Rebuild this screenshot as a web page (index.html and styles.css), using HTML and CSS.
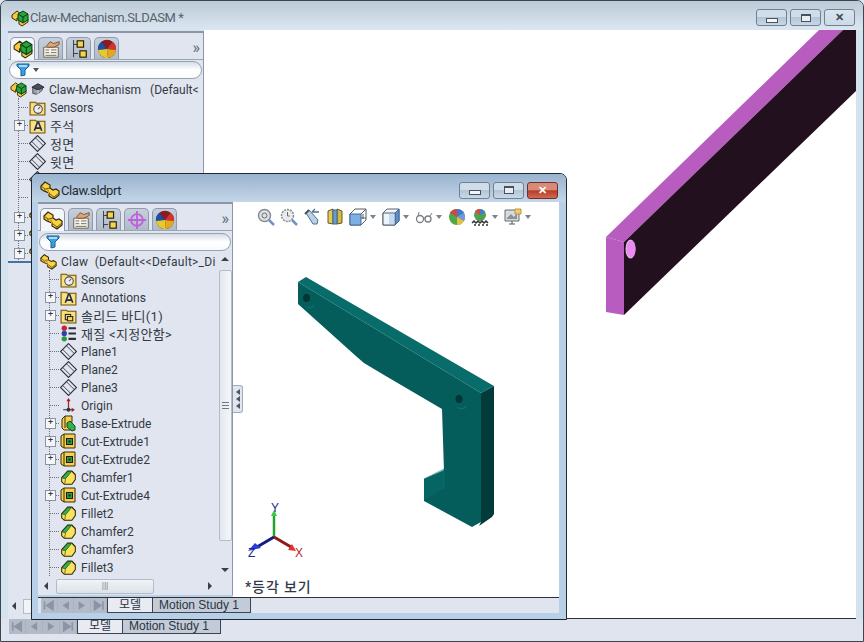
FILE: index.html
```html
<!DOCTYPE html>
<html lang="ko">

<head>
    <meta charset="utf-8">
    <title>Claw-Mechanism.SLDASM</title>
    <link rel="stylesheet" href="styles.css">
</head>

<body>
    <!-- shared icons -->
    <svg class="defs" width="0" height="0">
        <defs>
            <symbol id="i-part" viewBox="0 0 20 18">
                <path d="M1 5 5 1l5 3v3l3 2 3-1 3 2v4l-5 4-5-3v-3L4 10 1 8z" fill="#f9d246" stroke="#33280a" stroke-width="1.200"/>
                <path d="M1 5l4 3 5-1M10 13l4 3 5-4M14 16v1M5 8v2" fill="none" stroke="#6d5410"/>
                <path d="M5 8l3 2v3l1 .5V9L5 7z" fill="#d89a20"/>
            </symbol>
            <symbol id="i-asm" viewBox="0 0 18 18">
                <path d="M1 6 6 2l4 3 0 2 3 2 0 2 4-1v3l-6 4-3-2V11L6 9v3L1 9z" fill="#f6c83c" stroke="#3a2c08"/>
                <path d="M7 5l5-3 5 3v6l-5 3-5-3z" fill="#27a43a" stroke="#0c3d14"/>
                <path d="M7 5l5 3 5-3M12 8v6" fill="none" stroke="#0c3d14"/>
            </symbol>
            <symbol id="i-sub" viewBox="0 0 16 16">
                <path d="M2 13V6l5-3 6 3v3l-3 3-4 2z" fill="#9aa0a8" stroke="#3c4048"/>
                <path d="M1 6l7-4 7 4-7 3z" fill="#4a4e58" stroke="#22242a"/>
                <path d="M8 9v6" stroke="#e8e8e8"/>
            </symbol>
            <symbol id="i-folder" viewBox="0 0 16 16">
                <path d="M1 3h5l1 1h8v11H1z" fill="#f7d765" stroke="#6d5410"/>
                <path d="M2 5h12v9H2z" fill="#fbe896" opacity=".6"/>
            </symbol>
            <symbol id="i-sensor" viewBox="0 0 16 16">
                <use href="#i-folder"/>
                <circle cx="8.500" cy="9.500" r="4" fill="#e8eef4" stroke="#3c4a58"/>
                <path d="M8.500 9.500l2-2" stroke="#c0392b"/>
            </symbol>
            <symbol id="i-annot" viewBox="0 0 16 16">
                <use href="#i-folder"/>
                <path d="M5 13 8 5h1l3 8M6 10.500h5" fill="none" stroke="#1c2a58" stroke-width="1.500"/>
            </symbol>
            <symbol id="i-body" viewBox="0 0 16 16">
                <use href="#i-folder"/>
                <rect x="5" y="7" width="5" height="5" fill="#f7d765" stroke="#222"/>
                <rect x="7" y="9" width="5" height="4" fill="#f7d765" stroke="#222"/>
            </symbol>
            <symbol id="i-mat" viewBox="0 0 16 16">
                <circle cx="4" cy="3" r="2.500" fill="#c8242c"/>
                <circle cx="4" cy="8" r="2.500" fill="#2840b8"/>
                <circle cx="4" cy="13" r="2.500" fill="#2a9a3c"/>
                <path d="M8 3h7M8 8h7M8 13h7" stroke="#2c2c34" stroke-width="2"/>
            </symbol>
            <symbol id="i-plane" viewBox="0 0 16 16">
                <path d="M8 .5 15.500 8 8 15.500 .5 8z" fill="none" stroke="#30343c"/>
                <path d="M6 2.500l7.500 7.500M2.500 6l7.500 7.500" fill="none" stroke="#30343c" stroke-width=".8"/>
            </symbol>
            <symbol id="i-origin" viewBox="0 0 16 16">
                <path d="M8 2v10" stroke="#a81c22" stroke-width="1.200"/>
                <path d="M6 4l2-3 2 3z" fill="#a81c22"/>
                <path d="M3 12h10" stroke="#30343c"/>
                <path d="M11 10l3 2-3 2z" fill="#a81c22"/>
                <circle cx="8" cy="12" r="1.800" fill="#30343c"/>
            </symbol>
            <symbol id="i-base" viewBox="0 0 17 17">
                <path d="M2 4l3-3h7v5l-1 9H4l-2-2z" fill="#f7cf50" stroke="#3a2c08"/>
                <path d="M5 1v12" stroke="#3a2c08"/>
                <path d="M7 8l3-2 5 5v4l-3 1-5-4z" fill="#35b04c" stroke="#0f4a1c"/>
            </symbol>
            <symbol id="i-cut" viewBox="0 0 17 17">
                <path d="M1 3l3-2h11v14H4l-3-2z" fill="#f7cf50" stroke="#3a2c08"/>
                <path d="M4 1v14" stroke="#3a2c08"/>
                <rect x="6.500" y="5.500" width="6" height="6" fill="#2f9a42" stroke="#1b1d10"/>
                <rect x="8.500" y="7.500" width="2" height="2" fill="#102a14"/>
            </symbol>
            <symbol id="i-fillet" viewBox="0 0 20 18">
                <path d="M2 9 9 1.500h5l4 4v6l-4 5.500H5l-3-3z" fill="#fbe25c" stroke="#2a2408" stroke-width="1.200"/>
                <path d="M2.500 9.500 9 2h4.500l-7 8.500z" fill="#35b04c" stroke="#0f4a1c" stroke-width=".8"/>
                <path d="M6.500 10.500l-1 6M13.500 2l4 4" fill="none" stroke="#6a5a14"/>
            </symbol>
            <symbol id="i-prop" viewBox="0 0 22 22">
                <path d="M3 9h16v11H3z" fill="#f4f2ec" stroke="#6a6048"/>
                <path d="M5 12h4M11 12h6M5 15h4M11 15h6M5 18h12" stroke="#706858"/>
                <path d="M6 8l4-5 4 2 6-2v3l-6 3H7z" fill="#d8a878" stroke="#7a5030"/>
            </symbol>
            <symbol id="i-conf" viewBox="0 0 22 22">
                <path d="M5 1v19M5 6h5M5 16h5" stroke="#30343c" fill="none"/>
                <rect x="9" y="2" width="7" height="7" fill="#f4d450" stroke="#2c2408" stroke-width="1.300"/>
                <rect x="12" y="13" width="7" height="7" fill="#f4d450" stroke="#2c2408" stroke-width="1.300"/>
            </symbol>
            <symbol id="i-dim" viewBox="0 0 22 22">
                <circle cx="11" cy="11" r="6.500" fill="none" stroke="#c060d8" stroke-width="2"/>
                <path d="M11 1v20M1 11h20" stroke="#c060d8" stroke-width="2"/>
            </symbol>
            <symbol id="i-ball" viewBox="0 0 22 22">
                <circle cx="11" cy="11" r="10" fill="#2a2a2a"/>
                <path d="M11 11 5 3a10 10 0 0 0-4 9z" fill="#1b4fa8"/>
                <path d="M11 11 5 3a10 10 0 0 1 12 0z" fill="#8c1c22"/>
                <path d="M11 11l6-8a10 10 0 0 1 4 9z" fill="#d83030"/>
                <path d="M11 11l10 1a10 10 0 0 1-9 9z" fill="#e4a820"/>
                <path d="M11 11l1 10a10 10 0 0 1-11-9z" fill="#e6c830"/>
            </symbol>
            <symbol id="i-funnel" viewBox="0 0 14 14">
                <path d="M1 1h12v2L9 7v5l-4 1V7L1 3z" fill="#3ca0e0" stroke="#1a5c9c"/>
                <path d="M3 3h8" stroke="#d4ecfa" stroke-width="1.500"/>
            </symbol>
            <symbol id="i-zoomfit" viewBox="0 0 18 18">
                <circle cx="7.500" cy="7.500" r="6" fill="#dfe3e6" stroke="#868c92" stroke-width="1.500"/>
                <circle cx="7.500" cy="7.500" r="2.500" fill="none" stroke="#666c72"/>
                <path d="M12 12l5 5" stroke="#6f93c6" stroke-width="2.500"/>
            </symbol>
            <symbol id="i-zoomarea" viewBox="0 0 18 18">
                <circle cx="7.500" cy="7.500" r="6" fill="#e8eaec" stroke="#868c92" stroke-width="1.500" stroke-dasharray="2 1"/>
                <path d="M7.500 4v4h2" fill="none" stroke="#666c72"/>
                <path d="M12 12l5 5" stroke="#6f93c6" stroke-width="2.500"/>
            </symbol>
            <symbol id="i-prev" viewBox="0 0 18 18">
                <path d="M3 5l3-3 9 10-1 4-4 0z" fill="#b8d0e8" stroke="#50708c"/>
                <path d="M2 6l4-4" stroke="#40505c" stroke-width="2"/>
                <path d="M9 4h7M9 4l3-3" fill="none" stroke="#50708c" stroke-width="1.300"/>
            </symbol>
            <symbol id="i-section" viewBox="0 0 18 18">
                <path d="M2 3l5-2v15l-5-1z" fill="#e8c850" stroke="#5a5a30"/>
                <path d="M11 1l5 2v12l-5 1z" fill="#d8b840" stroke="#5a5a30"/>
                <path d="M7 2h4v14H7z" fill="#6a9cd0" stroke="#3c6890"/>
            </symbol>
            <symbol id="i-cubeview" viewBox="0 0 18 18">
                <path d="M1 6l5-5h11v11l-5 5H1z" fill="#fff" stroke="#555c66"/>
                <path d="M1 6h11v11H1z" fill="#7cb0e4" stroke="#3e6a98"/>
                <path d="M12 6l5-5M12 10h5M14 6v5" fill="none" stroke="#555c66"/>
            </symbol>
            <symbol id="i-cube" viewBox="0 0 18 18">
                <path d="M1 5l4-4h12v12l-4 4H1z" fill="#f4f8fc" stroke="#55606c"/>
                <path d="M13 5l4-4v12l-4 4z" fill="#5a90d0" stroke="#3e6a98"/>
                <path d="M1 5h12v12H1z" fill="#eef4fb" stroke="#55606c"/>
                <path d="M7 6h6v10H7z" fill="#a8c8ec" opacity=".6"/>
            </symbol>
            <symbol id="i-glasses" viewBox="0 0 18 18">
                <circle cx="5" cy="11" r="3.500" fill="none" stroke="#7a7e84" stroke-width="1.300"/>
                <circle cx="13" cy="11" r="3" fill="none" stroke="#7a7e84" stroke-width="1.300"/>
                <path d="M8 10l2 0M3 8l1-4M15 8l2-3" fill="none" stroke="#7a7e84"/>
            </symbol>
            <symbol id="i-appear" viewBox="0 0 18 18">
                <circle cx="9" cy="9" r="8" fill="#4ea848"/>
                <path d="M9 9 2 5a8 8 0 0 1 7-4z" fill="#d04840"/>
                <path d="M9 9V1a8 8 0 0 1 7 4z" fill="#4478d0"/>
                <path d="M9 9l7-4a8 8 0 0 1 0 8z" fill="#7098e0"/>
                <path d="M9 9l7 4a8 8 0 0 1-7 4z" fill="#e8c040"/>
            </symbol>
            <symbol id="i-scene" viewBox="0 0 18 18">
                <circle cx="9" cy="7" r="6" fill="#50a050"/>
                <path d="M9 7 4 3a6 6 0 0 1 5-2z" fill="#d84840"/>
                <path d="M9 7V1a6 6 0 0 1 5 3z" fill="#4878d0"/>
                <path d="M1 15l2-2 2 2 2-2 2 2 2-2 2 2 2-2 2 2M3 17h2M7 17h2M11 17h2M15 17h2" fill="none" stroke="#333" stroke-width="1.500"/>
            </symbol>
            <symbol id="i-display" viewBox="0 0 18 18">
                <path d="M1 2h14v11H1z" fill="#d8dbde" stroke="#666c72"/>
                <path d="M3 10l4-4 3 3 3-4v6H3z" fill="#8a9098"/>
                <path d="M11 1h6v5h-6z" fill="#f0cc70" stroke="#b89840"/>
                <path d="M5 16h6M8 13v3" stroke="#555"/>
            </symbol>
            <symbol id="i-first" viewBox="0 0 14 14"><path d="M3 3v8M11 3v8L5 7z" fill="#8d94a4" stroke="#8d94a4" stroke-width="1.500"/></symbol>
            <symbol id="i-back" viewBox="0 0 14 14"><path d="M10 3v8L4 7z" fill="#8d94a4"/></symbol>
            <symbol id="i-fwd" viewBox="0 0 14 14"><path d="M4 3v8l6-4z" fill="#8d94a4"/></symbol>
            <symbol id="i-last" viewBox="0 0 14 14"><path d="M11 3v8M3 3v8l6-4z" fill="#8d94a4" stroke="#8d94a4" stroke-width="1.500"/></symbol>
        </defs>
    </svg>

    <div class="desk">
        <!-- assembly window behind -->
        <div class="win win-back">
            <div class="titlebar">
                <svg class="title-icon"><use href="#i-asm"/></svg>
                <span class="title-text">Claw-Mechanism.SLDASM *</span>
                <div class="winbtns">
                    <div class="winbtn"><span class="glyph-min"></span></div>
                    <div class="winbtn"><span class="glyph-max"></span></div>
                    <div class="winbtn winbtn-x">&#x2715;</div>
                </div>
            </div>
            <div class="client">
                <div class="panel panel-back">
                    <div class="tabs">
                        <div class="tab active"><svg><use href="#i-asm"/></svg></div>
                        <div class="tab"><svg><use href="#i-prop"/></svg></div>
                        <div class="tab"><svg><use href="#i-conf"/></svg></div>
                        <div class="tab"><svg><use href="#i-ball"/></svg></div>
                        <span class="more">&raquo;</span>
                    </div>
                    <div class="filter"><svg><use href="#i-funnel"/></svg><span class="caret"></span></div>
                    <div class="root-row">
                        <svg class="ic"><use href="#i-asm"/></svg>
                        <svg class="ic ic-sub"><use href="#i-sub"/></svg>
                        <span>Claw-Mechanism&nbsp;&nbsp;&nbsp;(Default&lt;</span>
                    </div>
                    <ul class="tree">
                        <li><svg class="ic"><use href="#i-sensor"/></svg>Sensors</li>
                        <li class="has-kids"><svg class="ic"><use href="#i-annot"/></svg><span class="ko">주석</span></li>
                        <li><svg class="ic"><use href="#i-plane"/></svg><span class="ko">정면</span></li>
                        <li><svg class="ic"><use href="#i-plane"/></svg><span class="ko">윗면</span></li>
                        <li><svg class="ic"><use href="#i-plane"/></svg></li>
                        <li><svg class="ic"><use href="#i-origin"/></svg></li>
                        <li class="has-kids"><svg class="ic"><use href="#i-part"/></svg></li>
                        <li class="has-kids"><svg class="ic"><use href="#i-part"/></svg></li>
                        <li class="has-kids"><svg class="ic"><use href="#i-part"/></svg></li>
                    </ul>
                    <div class="rollback"></div>
                    <div class="hscroll-back"><span class="arrow-l"></span><span class="thumb-back"></span></div>
                </div>
                <div class="viewport">
                    <svg class="scene" viewBox="203 30 653 589" width="653" height="589">
                        <path d="M605 237 818 30h24L623 242z" fill="#b95cc0"/>
                        <path d="M605 237l18 5v73l-18-3z" fill="#b95cc0"/>
                        <path d="M623 242 842 30h14v60L623 315z" fill="#22101f"/>
                        <ellipse cx="629.500" cy="249" rx="5" ry="9.500" fill="#d8c0dc"/>
                        <ellipse cx="630" cy="249" rx="4.500" ry="8.500" fill="#ee88f5"/>
                    </svg>
                </div>
            </div>
            <div class="sheet-tabs sheet-tabs-back">
                <div class="nav"><svg><use href="#i-first"/></svg><svg><use href="#i-back"/></svg><svg><use href="#i-fwd"/></svg><svg><use href="#i-last"/></svg></div>
                <div class="sheet active">모델</div>
                <div class="sheet">Motion Study 1</div>
            </div>
        </div>

        <!-- part window in front -->
        <div class="win win-front">
            <div class="titlebar">
                <svg class="title-icon"><use href="#i-part"/></svg>
                <span class="title-text">Claw.sldprt</span>
                <div class="winbtns">
                    <div class="winbtn"><span class="glyph-min"></span></div>
                    <div class="winbtn"><span class="glyph-max"></span></div>
                    <div class="winbtn winbtn-close">&#x2715;</div>
                </div>
            </div>
            <div class="client">
                <div class="panel panel-front">
                    <div class="tabs">
                        <div class="tab active"><svg><use href="#i-part"/></svg></div>
                        <div class="tab"><svg><use href="#i-prop"/></svg></div>
                        <div class="tab"><svg><use href="#i-conf"/></svg></div>
                        <div class="tab"><svg><use href="#i-dim"/></svg></div>
                        <div class="tab"><svg><use href="#i-ball"/></svg></div>
                        <span class="more">&raquo;</span>
                    </div>
                    <div class="filter"><svg><use href="#i-funnel"/></svg></div>
                    <div class="tree-wrap">
                        <div class="tree-col">
                            <div class="root-row">
                                <svg class="ic"><use href="#i-part"/></svg>
                                <span>Claw&nbsp;&nbsp;(Default&lt;&lt;Default&gt;_Di</span>
                            </div>
                            <ul class="tree">
                                <li><svg class="ic"><use href="#i-sensor"/></svg>Sensors</li>
                                <li class="has-kids"><svg class="ic"><use href="#i-annot"/></svg>Annotations</li>
                                <li class="has-kids"><svg class="ic"><use href="#i-body"/></svg><span class="ko">솔리드 바디(1)</span></li>
                                <li><svg class="ic"><use href="#i-mat"/></svg><span class="ko">재질 &lt;지정안함&gt;</span></li>
                                <li><svg class="ic"><use href="#i-plane"/></svg>Plane1</li>
                                <li><svg class="ic"><use href="#i-plane"/></svg>Plane2</li>
                                <li><svg class="ic"><use href="#i-plane"/></svg>Plane3</li>
                                <li><svg class="ic"><use href="#i-origin"/></svg>Origin</li>
                                <li class="has-kids"><svg class="ic"><use href="#i-base"/></svg>Base-Extrude</li>
                                <li class="has-kids"><svg class="ic"><use href="#i-cut"/></svg>Cut-Extrude1</li>
                                <li class="has-kids"><svg class="ic"><use href="#i-cut"/></svg>Cut-Extrude2</li>
                                <li><svg class="ic"><use href="#i-fillet"/></svg>Chamfer1</li>
                                <li class="has-kids"><svg class="ic"><use href="#i-cut"/></svg>Cut-Extrude4</li>
                                <li><svg class="ic"><use href="#i-fillet"/></svg>Fillet2</li>
                                <li><svg class="ic"><use href="#i-fillet"/></svg>Chamfer2</li>
                                <li><svg class="ic"><use href="#i-fillet"/></svg>Chamfer3</li>
                                <li><svg class="ic"><use href="#i-fillet"/></svg>Fillet3</li>
                            </ul>
                        </div>
                        <div class="vscroll">
                            <span class="arrow-up"></span>
                            <div class="vthumb"><span class="grip"></span></div>
                            <span class="arrow-down"></span>
                        </div>
                    </div>
                    <div class="hscroll">
                        <span class="arrow-l"></span>
                        <div class="hthumb">|||</div>
                        <span class="arrow-r"></span>
                    </div>
                </div>
                <div class="handle"><span></span><span></span><span></span></div>
                <div class="viewport">
                    <div class="toolbar">
                        <svg><use href="#i-zoomfit"/></svg>
                        <svg><use href="#i-zoomarea"/></svg>
                        <svg><use href="#i-prev"/></svg>
                        <svg><use href="#i-section"/></svg>
                        <svg><use href="#i-cubeview"/></svg><span class="caret gap"></span>
                        <svg><use href="#i-cube"/></svg><span class="caret gap"></span>
                        <svg><use href="#i-glasses"/></svg><span class="caret gap"></span>
                        <svg><use href="#i-appear"/></svg>
                        <svg><use href="#i-scene"/></svg><span class="caret gap"></span>
                        <svg><use href="#i-display"/></svg><span class="caret"></span>
                    </div>
                    <svg class="scene" viewBox="234 203 325 394" width="325" height="394">
                        <path d="M299 283l8-5 188 109-13 7-183-111z" fill="#086c6a"/>
                        <path d="M299 283v22l59 53 7 6 20 12 58 34 2 62-20 8v22l48 26 9-5V394z" fill="#055d5b"/>
                        <path d="M482 394l13-7v128l-2 3-13 9 2-4z" fill="#033b3a"/>
                        <path d="M425 480l20-9v18l-20 12z" fill="#066563"/>
                        <path d="M425 480l20-10v20" fill="none" stroke="#087270" stroke-width=".6"/>
                        <path d="M304 303a7 7 0 0 0 11 5l1-7a6 6 0 0 1-12 2z" fill="#077270"/>
                        <ellipse cx="307.500" cy="299" rx="3.500" ry="4" fill="#023534"/>
                        <path d="M456 404a7 7 0 0 0 11 5l1-7a6 6 0 0 1-12 2z" fill="#077270"/>
                        <ellipse cx="460" cy="400" rx="3.500" ry="4" fill="#023534"/>
                        <path d="M275 538v-24" stroke="#28a030" stroke-width="2.500"/>
                        <path d="M275 511l-3 6h6z" fill="#30d040"/>
                        <path d="M275 538l-17 10" stroke="#141c80" stroke-width="3"/>
                        <path d="M249 552l7-8 6 5z" fill="#2c3cd8"/>
                        <path d="M275 538l17 10" stroke="#8c1c1c" stroke-width="3"/>
                        <path d="M297 552l-8-1 4-6z" fill="#e03038"/>
                        <text class="axis ax-y" x="272" y="513">Y</text>
                        <text class="axis ax-z" x="249" y="558">Z</text>
                        <text class="axis ax-x" x="296" y="558">X</text>
                    </svg>
                    <span class="view-name">*등각 보기</span>
                </div>
            </div>
            <div class="sheet-tabs">
                <div class="nav"><svg><use href="#i-first"/></svg><svg><use href="#i-back"/></svg><svg><use href="#i-fwd"/></svg><svg><use href="#i-last"/></svg></div>
                <div class="sheet active">모델</div>
                <div class="sheet">Motion Study 1</div>
            </div>
        </div>
    </div>
</body>

</html>
```

FILE: styles.css
```css
* {
    box-sizing: border-box;
}

body {
    margin: 0;
    font-family: Roboto, "Noto Sans CJK KR", sans-serif;
    font-size: 12px;
    color: #333a44;
}

.defs {
    position: absolute;
}

.desk {
    position: relative;
    width: 864px;
    height: 642px;
    overflow: hidden;
    background: #dfe4ee;
}

.win {
    position: absolute;
    display: flex;
    flex-direction: column;
    border: 1px solid #1d2a30;
    border-radius: 7px 7px 0 0;
}

.win-back {
    left: 0;
    top: 0;
    width: 864px;
    height: 642px;
    background: #d3e2ef;
    border-color: #3c4650;
}

.win-front {
    left: 31px;
    top: 173px;
    width: 536px;
    height: 447px;
    background: #b7d0e8;
}

/* title bars */
.titlebar {
    display: flex;
    align-items: center;
    flex-shrink: 0;
}

.win-back .titlebar {
    height: 29px;
    padding: 4px 8px 0 9px;
    background: linear-gradient(#bccbd8, #dbe6f0);
    border-radius: 6px 6px 0 0;
}

.win-front .titlebar {
    height: 28px;
    padding: 4px 8px 0 8px;
    background: linear-gradient(#9ab3cf, #c4d6e8);
    border-radius: 6px 6px 0 0;
}

.title-icon {
    width: 20px;
    height: 18px;
}

.title-text {
    font-size: 13px;
    letter-spacing: -.4px;
    color: #59626c;
}

.win-front .title-text {
    margin-left: 1px;
    color: #262c34;
}

.winbtns {
    display: flex;
    gap: 3px;
    margin-left: auto;
}

.winbtn {
    display: flex;
    align-items: center;
    justify-content: center;
    width: 31px;
    height: 17px;
    font-size: 11px;
    font-weight: bold;
    color: #3c4852;
    background: linear-gradient(#cfdde9 45%, #b4c5d6 50%, #c8d8e6);
    border: 1px solid #6f8193;
    border-radius: 3px;
}

.winbtn-x {
    background: linear-gradient(#d8e4ee, #cddbe8);
}

.winbtn-close {
    color: #fff;
    background: linear-gradient(#d88a78 45%, #b83c28 52%, #d06a52);
    border-color: #70302a;
}

.glyph-min {
    width: 12px;
    height: 5px;
    margin-top: 5px;
    background: #f2f6fa;
    border: 1px solid #46525e;
}

.glyph-max {
    width: 10px;
    height: 8px;
    background: #e8eef4;
    border: 1px solid #46525e;
    border-top-width: 2px;
}

/* window body */
.client {
    display: flex;
    flex: 1;
    min-height: 0;
    position: relative;
}

.win-back .client {
    margin: 0 7px 0 7px;
}

.win-front .client {
    margin: 0 7px 0 6px;
}

.panel {
    display: flex;
    flex-direction: column;
    flex-shrink: 0;
    position: relative;
    background: #e0e5ef;
    border-top: 2px solid #8b97a8;
    border-right: 1px solid #8b97a8;
}

.panel-back {
    width: 196px;
    margin-top: 1px;
}

.panel-back .filter {
    margin-top: 1px;
}

.panel-back .tree {
    margin-left: 10px;
}

.panel-back .tree li:nth-child(7) {
    margin-top: 2px;
}

.panel-front {
    width: 195px;
    margin-bottom: 2px;
}

.panel-front .root-row span {
    letter-spacing: .25px;
}

.viewport {
    position: relative;
    flex: 1;
    background: #fff;
    overflow: hidden;
}

.win-back .viewport {
    border-bottom: 1px solid #2c3238;
}

.scene {
    display: block;
}

/* panel tabs */
.tabs {
    display: flex;
    gap: 3px;
    align-items: flex-end;
    height: 27px;
    padding: 0 0 0 2px;
    border-bottom: 1px solid #9aa5b4;
}

.tab {
    display: flex;
    align-items: center;
    justify-content: center;
    width: 25px;
    height: 22px;
    background: linear-gradient(#c6cfdc, #b0bbca);
    border: 1px solid #8f9bab;
    border-bottom: 0;
    border-radius: 5px 5px 0 0;
}

.tab.active {
    margin-bottom: -1px;
    height: 23px;
    background: #f3f6fb;
}

.tab svg {
    width: 20px;
    height: 20px;
}

.more {
    margin: 0 3px 2px auto;
    font-size: 16px;
    line-height: 18px;
    color: #5c6672;
}

.filter {
    display: flex;
    align-items: center;
    height: 18px;
    margin: 2px 1px 1px;
    padding-left: 6px;
    background: linear-gradient(#d6dce6, #fff 50%, #f8fafc);
    border: 1px solid #97a2b0;
    border-radius: 9px;
}

.filter svg {
    width: 14px;
    height: 14px;
}

.caret {
    display: inline-block;
    width: 0;
    height: 0;
    margin-left: 3px;
    border: 3px solid transparent;
    border-top: 4px solid #4c5560;
    border-bottom: 0;
}

/* feature tree */
.tree-wrap {
    display: flex;
    flex: 1;
    min-height: 0;
}

.tree-col {
    flex: 1;
    min-width: 0;
    overflow: hidden;
}

.root-row {
    display: flex;
    align-items: center;
    height: 18px;
    padding-left: 2px;
    padding-top: 2px;
    gap: 4px;
    white-space: nowrap;
}

.ic {
    width: 17px;
    height: 17px;
    flex-shrink: 0;
    margin-top: -2px;
    margin-right: 4px;
}

.root-row .ic {
    margin-right: 0;
}

.ic-sub {
    width: 14px;
    height: 14px;
}

.ko {
    margin-top: -2px;
    font-size: 13px;
    letter-spacing: .3px;
}

.tree {
    list-style: none;
    margin: 0 0 0 11px;
    padding: 0;
    border-left: 1px dotted #6a7078;
}

.tree li {
    position: relative;
    display: flex;
    align-items: center;
    height: 18px;
    padding-top: 2px;
    padding-left: 10px;
    white-space: nowrap;
}

.tree li::before {
    content: "";
    position: absolute;
    left: 0;
    top: 9px;
    width: 9px;
    border-top: 1px dotted #6a7078;
}

.tree li.has-kids::after {
    content: "+";
    position: absolute;
    left: -5px;
    top: 4px;
    width: 9px;
    height: 9px;
    font-size: 9px;
    line-height: 7px;
    text-align: center;
    color: #30343c;
    background: #f4f6f9;
    border: 1px solid #8b95a2;
}

.rollback {
    position: absolute;
    left: 0;
    top: 228px;
    width: 100%;
    height: 2px;
    background: #4472a8;
}

/* scroll bars */
.vscroll {
    display: flex;
    flex-direction: column;
    align-items: center;
    width: 14px;
    flex-shrink: 0;
}

.vthumb {
    display: flex;
    align-items: center;
    justify-content: center;
    width: 13px;
    height: 271px;
    margin: 9px 0 0;
    background: linear-gradient(90deg, #e4e8ee, #f4f6f9);
    border: 1px solid #b4bcc8;
    border-radius: 2px;
}

.grip {
    width: 7px;
    height: 7px;
    border-top: 1px solid #70787f;
    border-bottom: 1px solid #70787f;
    background: linear-gradient(#70787f, #70787f) center/100% 1px no-repeat;
}

.arrow-up,
.arrow-down,
.arrow-l,
.arrow-r {
    display: inline-block;
    width: 0;
    height: 0;
    flex-shrink: 0;
    border: 4px solid transparent;
}

.arrow-up {
    margin-top: 5px;
    border-top: 0;
    border-bottom-color: #3a4048;
}

.arrow-down {
    margin-top: auto;
    margin-bottom: 5px;
    border-bottom: 0;
    border-top-color: #3a4048;
}

.arrow-l {
    border-left: 0;
    border-right-color: #3a4048;
}

.arrow-r {
    border-right: 0;
    border-left-color: #3a4048;
}

.hscroll {
    display: flex;
    align-items: center;
    height: 18px;
    padding: 0 20px 0 6px;
    gap: 8px;
    flex-shrink: 0;
}

.hscroll .arrow-r {
    margin-left: auto;
}

.hthumb {
    width: 98px;
    height: 15px;
    font-size: 9px;
    line-height: 13px;
    text-align: center;
    color: #70787f;
    background: linear-gradient(#f0f3f7, #dde2ea);
    border: 1px solid #b4bcc8;
    border-radius: 2px;
}

.hscroll-back {
    display: flex;
    align-items: center;
    gap: 7px;
    margin-top: auto;
    height: 18px;
    padding-left: 4px;
    margin-bottom: 4px;
}

.thumb-back {
    width: 60px;
    height: 15px;
    background: #f0f3f7;
    border: 1px solid #b4bcc8;
}

/* collapse handle */
.handle {
    position: absolute;
    left: 195px;
    top: 183px;
    display: flex;
    flex-direction: column;
    justify-content: center;
    gap: 1px;
    width: 10px;
    height: 28px;
    padding-left: 3px;
    background: #e0e5ef;
    border: 1px solid #a0aab8;
    border-left: 0;
    border-radius: 0 3px 3px 0;
    z-index: 1;
}

.handle span {
    width: 0;
    height: 0;
    border: 3px solid transparent;
    border-left: 0;
    border-right: 4px solid #4c5560;
}

/* view toolbar */
.toolbar {
    position: absolute;
    left: 24px;
    top: 6px;
    display: flex;
    align-items: center;
    gap: 5px;
}

.toolbar svg {
    width: 18px;
    height: 18px;
}

.toolbar .caret {
    margin-left: -2px;
    border-top-color: #7a828c;
}

.toolbar .caret.gap {
    margin-right: 1px;
}

.axis {
    font-size: 12px;
    font-family: "Liberation Sans", sans-serif;
}

.ax-y,
.ax-z {
    fill: #1c2a88;
}

.ax-x {
    fill: #b02a30;
}

.view-name {
    position: absolute;
    left: 12px;
    top: 374px;
    font-size: 14px;
    font-weight: 500;
    letter-spacing: .9px;
    color: #33384a;
}

/* sheet tabs along the bottom */
.sheet-tabs {
    display: flex;
    flex-shrink: 0;
    align-items: flex-start;
    height: 22px;
    margin: 0 7px 0 6px;
    padding-left: 3px;
    background: linear-gradient(#dfe4ee 15px, #b7d0e8 15px);
    border-top: 1px solid #2c3238;
}

.sheet-tabs-back {
    margin: 0;
    padding-left: 8px;
    background: #dfe4ee;
    border-top: 0;
}

.nav {
    display: flex;
    width: 66px;
    height: 15px;
    background: #aab2c0;
}

.sheet-tabs-back .nav {
    width: 68px;
}

.nav svg {
    width: 16px;
    height: 15px;
    margin-right: 1px;
    background: #b4bbc8;
}

.sheet {
    width: 98px;
    height: 15px;
    padding: 0 0 0 6px;
    font-family: "Liberation Sans", "Noto Sans CJK KR", sans-serif;
    font-size: 12px;
    line-height: 14px;
    white-space: nowrap;
    color: #2c3440;
    background: #c3cbd8;
    border: 1px solid #3c4450;
    border-top: 0;
    border-left: 0;
}

.sheet.active {
    width: 46px;
    padding: 0;
    text-align: center;
    background: #e8ecf2;
    border-left: 1px solid #3c4450;
}
```
